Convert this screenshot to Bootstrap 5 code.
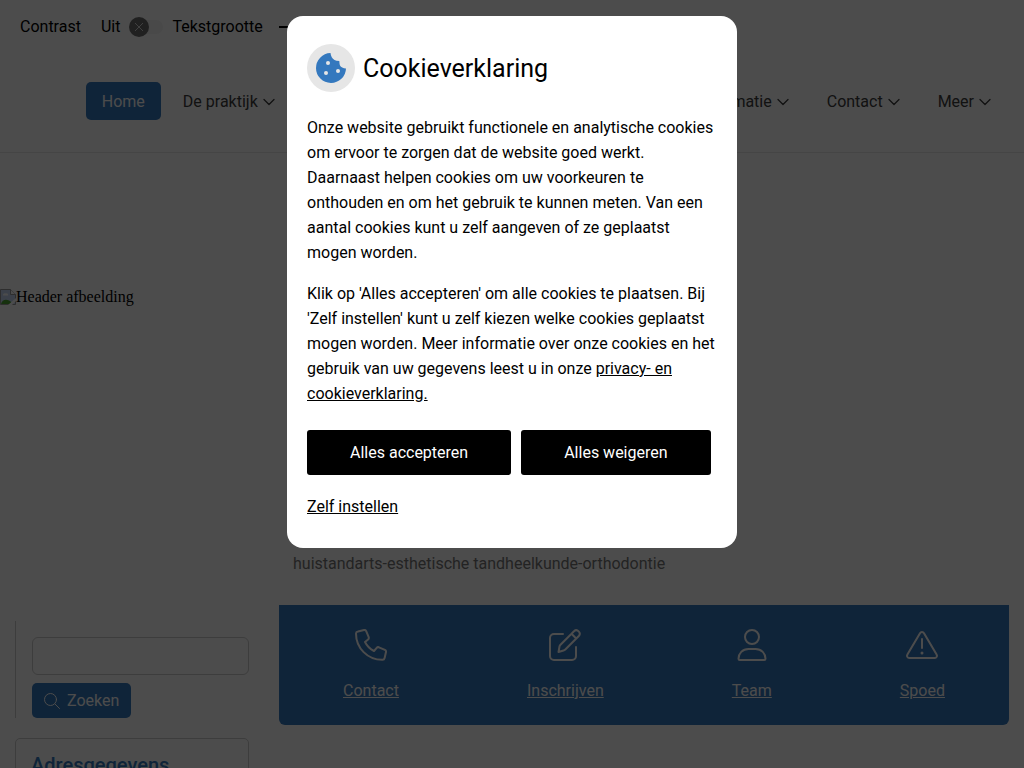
<!DOCTYPE html>
<html lang="nl">
<head>
<meta charset="utf-8">
<meta name="viewport" content="width=device-width, initial-scale=1">
<title>Cookieverklaring</title>
<link href="https://cdn.jsdelivr.net/npm/bootstrap@5.3.0/dist/css/bootstrap.min.css" rel="stylesheet">
<style>
:root { --brand: #3478be; }
html, body { height: 100%; }
body { font-family: Roboto, "Liberation Sans", sans-serif; font-size: 16px; line-height: 25px; color: #000; overflow: hidden; }
.brand-bg { background: var(--brand); }
svg { display: block; flex: none; }

.tools { height: 53px; padding: 0 20px; }
.contrast-track { width: 34px; height: 14px; margin-left: 9px; border-radius: 7px; background: #f4f4f4; }
.contrast-input { position: absolute; opacity: 0; }
.contrast-knob { width: 20px; height: 20px; margin-top: -3px; border-radius: 50%; background: #6c6c6c; }
.size-label { margin-left: 9px; }
.size-btn { border: 0; background: none; padding: 0; }

.main-nav { height: 100px; padding: 29px 17px 0 0; border-bottom: 1px solid #e8e8e8; }
.main-nav .nav-link { padding: 7px 16px 5px; line-height: 26px; border-radius: 5px; color: #3c3c3c; white-space: nowrap; }
.main-nav .nav-link.active { background: var(--brand); color: #fff; }
.main-nav .nav { gap: 6px; }

.hero { height: 452px; }
.hero-alt { font-family: "Liberation Serif", serif; line-height: 18px; padding-top: 135px; }
.hero-caption { color: #777; padding: 0 16px 29px 293px; }

.page-cols { padding: 0 15px; gap: 30px; }
.side { width: 234px; flex: none; padding-top: 16px; }
.search-box { border-left: 1px solid #ccc; padding: 16px 0 0 16px; }
.search-box .form-control { height: 38px; border-color: #ccc; }
.search-btn { color: #fff; padding: 5px 12px; gap: 7px; line-height: 25px; border: 0; border-radius: 5px; background: var(--brand); }
.address-box { margin-top: 20px; border: 1px solid #ccc; border-radius: 5px; padding: 13px 15px; }
.address-box h2 { font-size: 20px; line-height: 26px; font-weight: 500; color: var(--brand); margin: 0 0 8px; }
.quick { height: 120px; border-radius: 0 0 6px 6px; padding: 24px 0; }
.quick a { color: #fff; gap: 17px; }

.cookie-backdrop { position: fixed; inset: 0; background: rgba(0, 0, 0, .7); padding-top: 16px; }
.cookie-box { width: 450px; max-width: 100%; border-radius: 16px; background: #fff; padding: 28px 20px 29px; }
.cookie-head { margin-bottom: 23px; }
.cookie-badge { width: 48px; height: 48px; border-radius: 50%; background: #e6e6e6; }
.cookie-box h1 { font-size: 25px; line-height: 32px; font-weight: 400; margin: 0; padding-top: 2px; }
.cookie-box a { color: #000; }
.cookie-actions { gap: 10px; margin-bottom: 19px; }
.cookie-btn { height: 45px; border: 0; border-radius: 3px; background: #000; color: #fff; padding: 0 43px; white-space: nowrap; }
</style>
</head>
<body>
<header>
  <div class="tools d-flex align-items-center">
    <span>Contrast</span>
    <label class="d-flex align-items-center ms-3 ps-1" for="contrast">Uit
      <input class="contrast-input" type="checkbox" id="contrast">
      <span class="contrast-track">
        <span class="contrast-knob d-flex align-items-center justify-content-center">
          <svg width="10" height="10" viewBox="0 0 10 10" stroke="#d8d8d8" fill="none"><path d="M1 1l8 8M9 1l-8 8"/></svg>
        </span>
      </span>
    </label>
    <span class="size-label">Tekstgrootte</span>
    <button class="size-btn ms-3" type="button" aria-label="Kleiner"><svg width="14" height="14" viewBox="0 0 14 14" stroke="#000" stroke-width="2"><path d="M0 7h14"/></svg></button>
  </div>
  <nav class="main-nav d-flex align-items-start justify-content-end">
    <div class="nav flex-nowrap">
      <a class="nav-link active" href="#">Home</a>
      <a class="nav-link d-flex align-items-center gap-1" href="#">De praktijk <svg width="13" height="13" viewBox="0 0 13 13" fill="none" stroke="currentColor" stroke-width="1.300" stroke-linecap="round" stroke-linejoin="round"><path d="M2 3.500l5 5 5-5"/></svg></a>
      <a class="nav-link d-flex align-items-center gap-1" href="#">Behandelingen <svg width="13" height="13" viewBox="0 0 13 13" fill="none" stroke="currentColor" stroke-width="1.300" stroke-linecap="round" stroke-linejoin="round"><path d="M2 3.500l5 5 5-5"/></svg></a>
      <a class="nav-link" href="#">Inschrijven</a>
      <a class="nav-link" href="#">Afspraken</a>
      <a class="nav-link d-flex align-items-center gap-1" href="#">Informatie <svg width="13" height="13" viewBox="0 0 13 13" fill="none" stroke="currentColor" stroke-width="1.300" stroke-linecap="round" stroke-linejoin="round"><path d="M2 3.500l5 5 5-5"/></svg></a>
      <a class="nav-link d-flex align-items-center gap-1" href="#">Contact <svg width="13" height="13" viewBox="0 0 13 13" fill="none" stroke="currentColor" stroke-width="1.300" stroke-linecap="round" stroke-linejoin="round"><path d="M2 3.500l5 5 5-5"/></svg></a>
      <a class="nav-link d-flex align-items-center gap-1" href="#">Meer <svg width="13" height="13" viewBox="0 0 13 13" fill="none" stroke="currentColor" stroke-width="1.300" stroke-linecap="round" stroke-linejoin="round"><path d="M2 3.500l5 5 5-5"/></svg></a>
    </div>
  </nav>
</header>
<main>
  <section class="hero d-flex flex-column justify-content-between">
    <div class="hero-alt d-flex align-items-center">
      <svg width="16" height="16" viewBox="0 0 16 16"><path d="M.5.5h10l5 5v10H.5z" fill="#c6d8f4" stroke="#999"/><path d="M3 6.500a2 2 0 0 1 3-2 1.500 1.500 0 0 1 2 2z" fill="#fff"/><path d="M1 15c1-5 7-6 11-1v1z" fill="#4aa530"/><path d="M10.500.5v5h5" fill="#fff" stroke="#999"/><path d="M8 16l8-7v3l-4 4z" fill="#fff"/></svg>
      <span>Header afbeelding</span>
    </div>
    <div class="hero-caption">huistandarts-esthetische tandheelkunde-orthodontie</div>
  </section>
  <div class="page-cols d-flex align-items-start">
    <aside class="side">
      <form class="search-box">
        <input class="form-control mb-2" type="text" aria-label="Zoekterm">
        <button class="search-btn d-flex align-items-center" type="button"><svg width="16" height="16" viewBox="0 0 16 16" fill="none" stroke="#fff" stroke-linecap="round"><circle cx="6.500" cy="6.500" r="6"/><path d="M11 11l4.500 4.500"/></svg>Zoeken</button>
      </form>
      <div class="address-box"><h2>Adresgegevens</h2></div>
    </aside>
    <div class="quick brand-bg d-flex flex-fill justify-content-around">
      <a class="d-flex flex-column align-items-center" href="#"><svg width="32" height="32" viewBox="0 0 32 32" fill="none" stroke="#fff" stroke-width="2" stroke-linejoin="round"><path d="M3 2.500L9 1q1.500-.3 2.200 1.200l2.500 6q.4 1.300-.6 2.200L10 13q3 6 9 9l2.700-3.200q.9-1 2.200-.5l6 2.600q1.400.7 1.100 2.100l-1.400 6q-.4 1.800-2 1.800C12.500 31 1 19 1 4.500q0-1.600 2-2z"/></svg>Contact</a>
      <a class="d-flex flex-column align-items-center" href="#"><svg width="32" height="32" viewBox="0 0 32 32" fill="none" stroke="#fff" stroke-width="2" stroke-linecap="round" stroke-linejoin="round"><path d="M14 5H5a4 4 0 0 0-4 4v18a4 4 0 0 0 4 4h18a4 4 0 0 0 4-4v-9"/><path d="M9.500 23l1-5.500q.2-1 1-1.800L25 2.200a3.400 3.400 0 0 1 4.800 4.800L16.300 20.500q-.8.8-1.800 1zM22.500 4.800l4.700 4.700"/></svg>Inschrijven</a>
      <a class="d-flex flex-column align-items-center" href="#"><svg width="32" height="32" viewBox="0 0 32 32" fill="none" stroke="#fff" stroke-width="2" stroke-linejoin="round"><circle cx="16" cy="8" r="7"/><path d="M12.500 20h7c6 0 10 4.500 10 9.800q0 1.200-1.200 1.200H3.700q-1.200 0-1.200-1.200c0-5.300 4-9.800 10-9.800z"/></svg>Team</a>
      <a class="d-flex flex-column align-items-center" href="#"><svg width="32" height="32" viewBox="0 0 32 32" fill="none" stroke="#fff" stroke-width="2" stroke-linecap="round" stroke-linejoin="round"><path d="M14 4.200a2.300 2.300 0 0 1 4 0l12.600 21.400a2.200 2.200 0 0 1-1.900 3.400H3.300a2.200 2.200 0 0 1-1.900-3.400zM16 10v9"/><circle cx="16" cy="24" r="1.500" fill="#fff" stroke="none"/></svg>Spoed</a>
    </div>
  </div>
</main>

<div class="cookie-backdrop d-flex justify-content-center align-items-start">
  <div class="cookie-box" role="dialog" aria-labelledby="cookie-title">
    <div class="cookie-head d-flex align-items-center gap-2">
      <span class="cookie-badge d-flex align-items-center justify-content-center">
        <svg width="30" height="30" viewBox="0 0 30 30"><path d="M14.500 0A15 15 0 1 0 30 15.500Q25.500 15 24 12.500Q23.500 11.500 23.300 8Q20 7.800 18.500 7Q15 5 14.500 0z" fill="#3478be"/><g fill="#e6e6e6"><circle cx="12" cy="10" r="2"/><circle cx="10" cy="20" r="2"/><circle cx="22" cy="18" r="2"/></g></svg>
      </span>
      <h1 id="cookie-title">Cookieverklaring</h1>
    </div>
    <p>Onze website gebruikt functionele en analytische cookies om ervoor te zorgen dat de website goed werkt. Daarnaast helpen cookies om uw voorkeuren te onthouden en om het gebruik te kunnen meten. Van een aantal cookies kunt u zelf aangeven of ze geplaatst mogen worden.</p>
    <p class="mb-4">Klik op 'Alles accepteren' om alle cookies te plaatsen. Bij 'Zelf instellen' kunt u zelf kiezen welke cookies geplaatst mogen worden. Meer informatie over onze cookies en het gebruik van uw gegevens leest u in onze <a href="#">privacy- en cookieverklaring.</a></p>
    <div class="cookie-actions d-flex"><button class="cookie-btn" type="button">Alles accepteren</button><button class="cookie-btn" type="button">Alles weigeren</button></div>
    <a href="#">Zelf instellen</a>
  </div>
</div>
<script src="https://cdn.jsdelivr.net/npm/bootstrap@5.3.0/dist/js/bootstrap.bundle.min.js"></script>
</body>
</html>
